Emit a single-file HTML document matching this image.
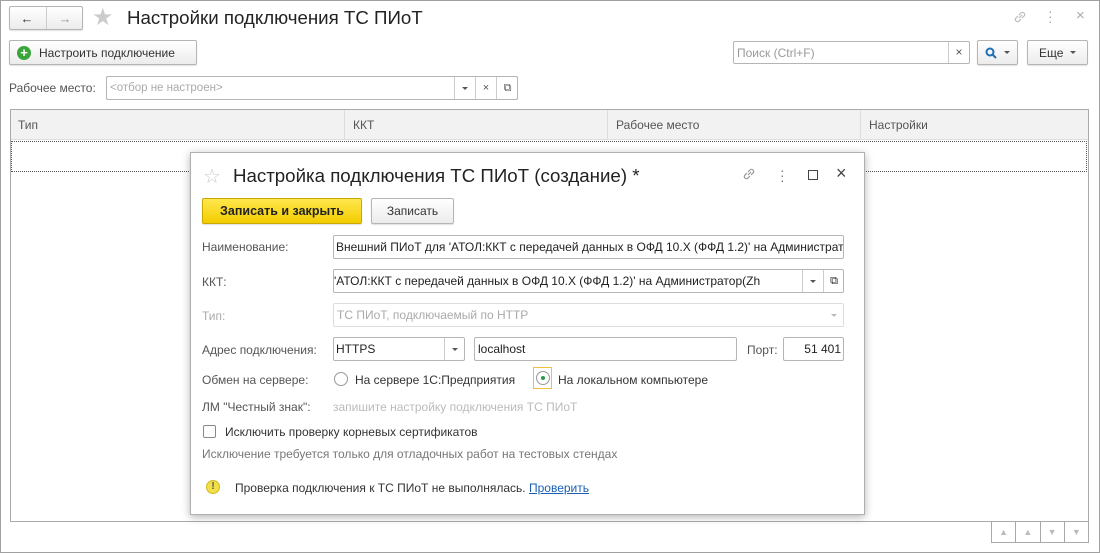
<!DOCTYPE html>
<html><head><meta charset="utf-8"><style>
*{box-sizing:border-box;margin:0;padding:0}
body{width:1100px;height:553px;overflow:hidden;background:#fff;font-family:"Liberation Sans",sans-serif;font-size:12px;color:#333;position:relative}
.a{position:absolute}
.win{left:0;top:0;width:1100px;height:553px;border:1px solid #a0a0a0}
.btn{position:absolute;border:1px solid #b5b5b5;border-radius:2px;background:linear-gradient(#fff,#ececec);box-shadow:0 1px 1px rgba(0,0,0,.12);display:flex;align-items:center;justify-content:center;color:#333}
.fld{position:absolute;border:1px solid #b5b5b5;border-radius:2px;background:#fff;display:flex;align-items:center;padding-left:3px;white-space:nowrap;overflow:hidden}
.lbl{position:absolute;color:#555;white-space:nowrap}
.tri{width:0;height:0;border-left:3px solid transparent;border-right:3px solid transparent;border-top:3px solid #555;display:inline-block}
</style></head><body>
<div class="a win"></div>
<div class="btn" style="left:9px;top:6px;width:74px;height:24px"><span style="font-size:13px;font-weight:bold">&#8592;</span><span style="display:inline-block;width:1px;height:22px;background:#ccc;margin:0 12px"></span><span style="font-size:13px;color:#999">&#8594;</span></div>
<div class="a" style="left:92px;top:3px;font-size:24px;color:#ccc">&#9733;</div>
<div class="a" style="left:127px;top:7px;font-size:18.7px;color:#222">Настройки подключения ТС ПИоТ</div>
<svg class="a" style="left:1012px;top:9px" width="16" height="16" viewBox="0 0 16 16"><path d="M7 9l3-3M6 7L3.5 9.5a2.3 2.3 0 0 0 3 3L9 10M10 9l2.5-2.5a2.3 2.3 0 0 0-3-3L7 6" stroke="#bbb" fill="none" stroke-width="1.2"/></svg>
<div class="a" style="left:1048px;top:9px;width:3px;font-size:14px;line-height:5px;color:#aaa">·<br>·<br>·</div>
<div class="a" style="left:1076px;top:7px;color:#aaa;font-size:15px">×</div>
<div class="btn" style="left:9px;top:40px;width:188px;height:25px;justify-content:flex-start;padding-left:7px"><span style="width:14px;height:14px;border-radius:50%;background:#3aa53a;color:#fff;font-size:13px;line-height:14px;text-align:center;font-weight:bold;margin-right:8px">+</span>Настроить подключение</div>
<div class="fld" style="left:733px;top:41px;width:237px;height:23px;color:#999">Поиск (Ctrl+F)<span style="position:absolute;right:0;top:0;bottom:0;width:21px;border-left:1px solid #ccc;text-align:center;line-height:21px;color:#555">×</span></div>
<div class="btn" style="left:977px;top:40px;width:41px;height:25px"><svg width="12" height="12" viewBox="0 0 12 12"><circle cx="5" cy="5" r="3.5" stroke="#1f6fb5" stroke-width="2" fill="none"/><path d="M7.5 7.5l3.5 3.5" stroke="#1f6fb5" stroke-width="2"/></svg>&nbsp;&nbsp;<span class="tri"></span></div>
<div class="btn" style="left:1027px;top:40px;width:61px;height:25px">Еще&nbsp;&nbsp;<span class="tri"></span></div>
<div class="lbl" style="left:9px;top:81px">Рабочее место:</div>
<div class="fld" style="left:106px;top:76px;width:412px;height:24px;color:#aaa;font-size:11.5px">&lt;отбор не настроен&gt;
<span style="position:absolute;left:347px;top:0;bottom:0;width:21px;border-left:1px solid #ccc;display:flex;align-items:center;justify-content:center"><span class="tri"></span></span>
<span style="position:absolute;left:368px;top:0;bottom:0;width:21px;border-left:1px solid #ccc;text-align:center;line-height:22px;color:#555;font-size:11px">×</span>
<span style="position:absolute;left:389px;top:0;bottom:0;width:22px;border-left:1px solid #ccc;text-align:center;line-height:22px;color:#555;font-size:11px">⧉</span></div>
<div class="a" style="left:10px;top:109px;width:1079px;height:413px;border:1px solid #aaa"></div>
<div class="a" style="left:11px;top:110px;width:1077px;height:30px;background:#f2f2f2;border-bottom:1px solid #ddd"></div>
<div class="a" style="left:344px;top:110px;height:30px;border-left:1px solid #ddd"></div>
<div class="a" style="left:607px;top:110px;height:30px;border-left:1px solid #ddd"></div>
<div class="a" style="left:860px;top:110px;height:30px;border-left:1px solid #ddd"></div>
<div class="lbl" style="left:18px;top:118px">Тип</div>
<div class="lbl" style="left:353px;top:118px">ККТ</div>
<div class="lbl" style="left:616px;top:118px">Рабочее место</div>
<div class="lbl" style="left:869px;top:118px">Настройки</div>
<div class="a" style="left:11px;top:141px;width:1076px;height:31px;border:1px dotted #555"></div>
<div class="a" style="left:991px;top:521px;width:98px;height:22px;border:1px solid #aaa;display:flex">
<div style="flex:1;border-right:1px solid #aaa;color:#bbb;text-align:center;font-size:9px;line-height:20px">▲</div><div style="flex:1;border-right:1px solid #aaa;color:#bbb;text-align:center;font-size:9px;line-height:20px">▲</div><div style="flex:1;border-right:1px solid #aaa;color:#bbb;text-align:center;font-size:9px;line-height:20px">▼</div><div style="flex:1;color:#bbb;text-align:center;font-size:9px;line-height:20px">▼</div></div>
<div class="a" style="left:190px;top:152px;width:675px;height:363px;background:#fff;border:1px solid #b0b0b0;box-shadow:0 2px 8px rgba(0,0,0,.3)"></div>
<div class="a" style="left:203px;top:164px;font-size:20px;color:#ccc">☆</div>
<div class="a" style="left:233px;top:165px;font-size:18.7px;color:#222">Настройка подключения ТС ПИоТ (создание) *</div>
<svg class="a" style="left:741px;top:166px" width="16" height="16" viewBox="0 0 16 16"><path d="M7 9l3-3M6 7L3.5 9.5a2.3 2.3 0 0 0 3 3L9 10M10 9l2.5-2.5a2.3 2.3 0 0 0-3-3L7 6" stroke="#999" fill="none" stroke-width="1.2"/></svg>
<div class="a" style="left:780px;top:168px;font-size:14px;line-height:5px;color:#777">·<br>·<br>·</div>
<div class="a" style="left:808px;top:170px;width:10px;height:10px;border:1.5px solid #444"></div>
<div class="a" style="left:836px;top:163px;font-size:18px;color:#444">×</div>
<div class="btn" style="left:202px;top:198px;width:160px;height:26px;background:linear-gradient(#ffe84d,#f3cc00);border-color:#c9a800;color:#222;font-weight:bold;font-size:12.5px">Записать и закрыть</div>
<div class="btn" style="left:371px;top:198px;width:83px;height:26px">Записать</div>
<div class="lbl" style="left:202px;top:240px">Наименование:</div>
<div class="fld" style="left:333px;top:235px;width:511px;height:24px;color:#222;padding-left:2px">Внешний ПИоТ для 'АТОЛ:ККТ с передачей данных в ОФД 10.Х (ФФД 1.2)' на Администратор</div>
<div class="lbl" style="left:202px;top:275px">ККТ:</div>
<div class="fld" style="left:333px;top:269px;width:511px;height:24px;color:#222;padding-left:0"><span style="width:466px;overflow:hidden;display:inline-block">'АТОЛ:ККТ с передачей данных в ОФД 10.Х (ФФД 1.2)' на Администратор(Zh</span>
<span style="position:absolute;left:468px;top:0;bottom:0;width:21px;border-left:1px solid #ccc;display:flex;align-items:center;justify-content:center"><span class="tri"></span></span>
<span style="position:absolute;left:489px;top:0;bottom:0;width:21px;border-left:1px solid #ccc;text-align:center;line-height:22px;font-size:11px">⧉</span></div>
<div class="lbl" style="left:202px;top:309px;color:#aaa">Тип:</div>
<div class="fld" style="left:333px;top:303px;width:511px;height:24px;color:#aaa;border-color:#ddd">ТС ПИоТ, подключаемый по HTTP<span style="position:absolute;left:489px;top:0;bottom:0;width:21px;display:flex;align-items:center;justify-content:center"><span class="tri" style="border-top-color:#bbb"></span></span></div>
<div class="lbl" style="left:202px;top:343px">Адрес подключения:</div>
<div class="fld" style="left:333px;top:337px;width:132px;height:24px;color:#222;padding-left:2px">HTTPS<span style="position:absolute;left:110px;top:0;bottom:0;width:21px;border-left:1px solid #ccc;display:flex;align-items:center;justify-content:center"><span class="tri"></span></span></div>
<div class="fld" style="left:474px;top:337px;width:263px;height:24px;color:#222">localhost</div>
<div class="lbl" style="left:747px;top:343px">Порт:</div>
<div class="fld" style="left:783px;top:337px;width:61px;height:24px;color:#222;justify-content:flex-end;padding-right:2px">51 401</div>
<div class="lbl" style="left:202px;top:373px">Обмен на сервере:</div>
<div class="a" style="left:334px;top:372px;width:14px;height:14px;border:1px solid #999;border-radius:50%"></div>
<div class="lbl" style="left:355px;top:373px;color:#333">На сервере 1С:Предприятия</div>
<div class="a" style="left:533px;top:367px;width:19px;height:22px;border:1px solid #f0c040"></div>
<div class="a" style="left:536px;top:371px;width:14px;height:14px;border:1px solid #999;border-radius:50%"></div>
<div class="a" style="left:541px;top:376px;width:4px;height:4px;background:#2a9a4a;border-radius:50%"></div>
<div class="lbl" style="left:558px;top:373px;color:#333">На локальном компьютере</div>
<div class="lbl" style="left:202px;top:400px">ЛМ "Честный знак":</div>
<div class="lbl" style="left:333px;top:400px;color:#bbb">запишите настройку подключения ТС ПИоТ</div>
<div class="a" style="left:203px;top:425px;width:13px;height:13px;border:1px solid #888;border-radius:2px"></div>
<div class="lbl" style="left:225px;top:425px;color:#333">Исключить проверку корневых сертификатов</div>
<div class="lbl" style="left:202px;top:447px;color:#777">Исключение требуется только для отладочных работ на тестовых стендах</div>
<div class="a" style="left:206px;top:480px;width:14px;height:14px;border-radius:50%;background:#f2e04a;border:1px solid #d0b820;color:#555;font-size:10px;font-weight:bold;text-align:center;line-height:12px">!</div>
<div class="lbl" style="left:235px;top:481px;color:#333">Проверка подключения к ТС ПИоТ не выполнялась. <span style="color:#1a5fb4;text-decoration:underline">Проверить</span></div>
</body></html>
